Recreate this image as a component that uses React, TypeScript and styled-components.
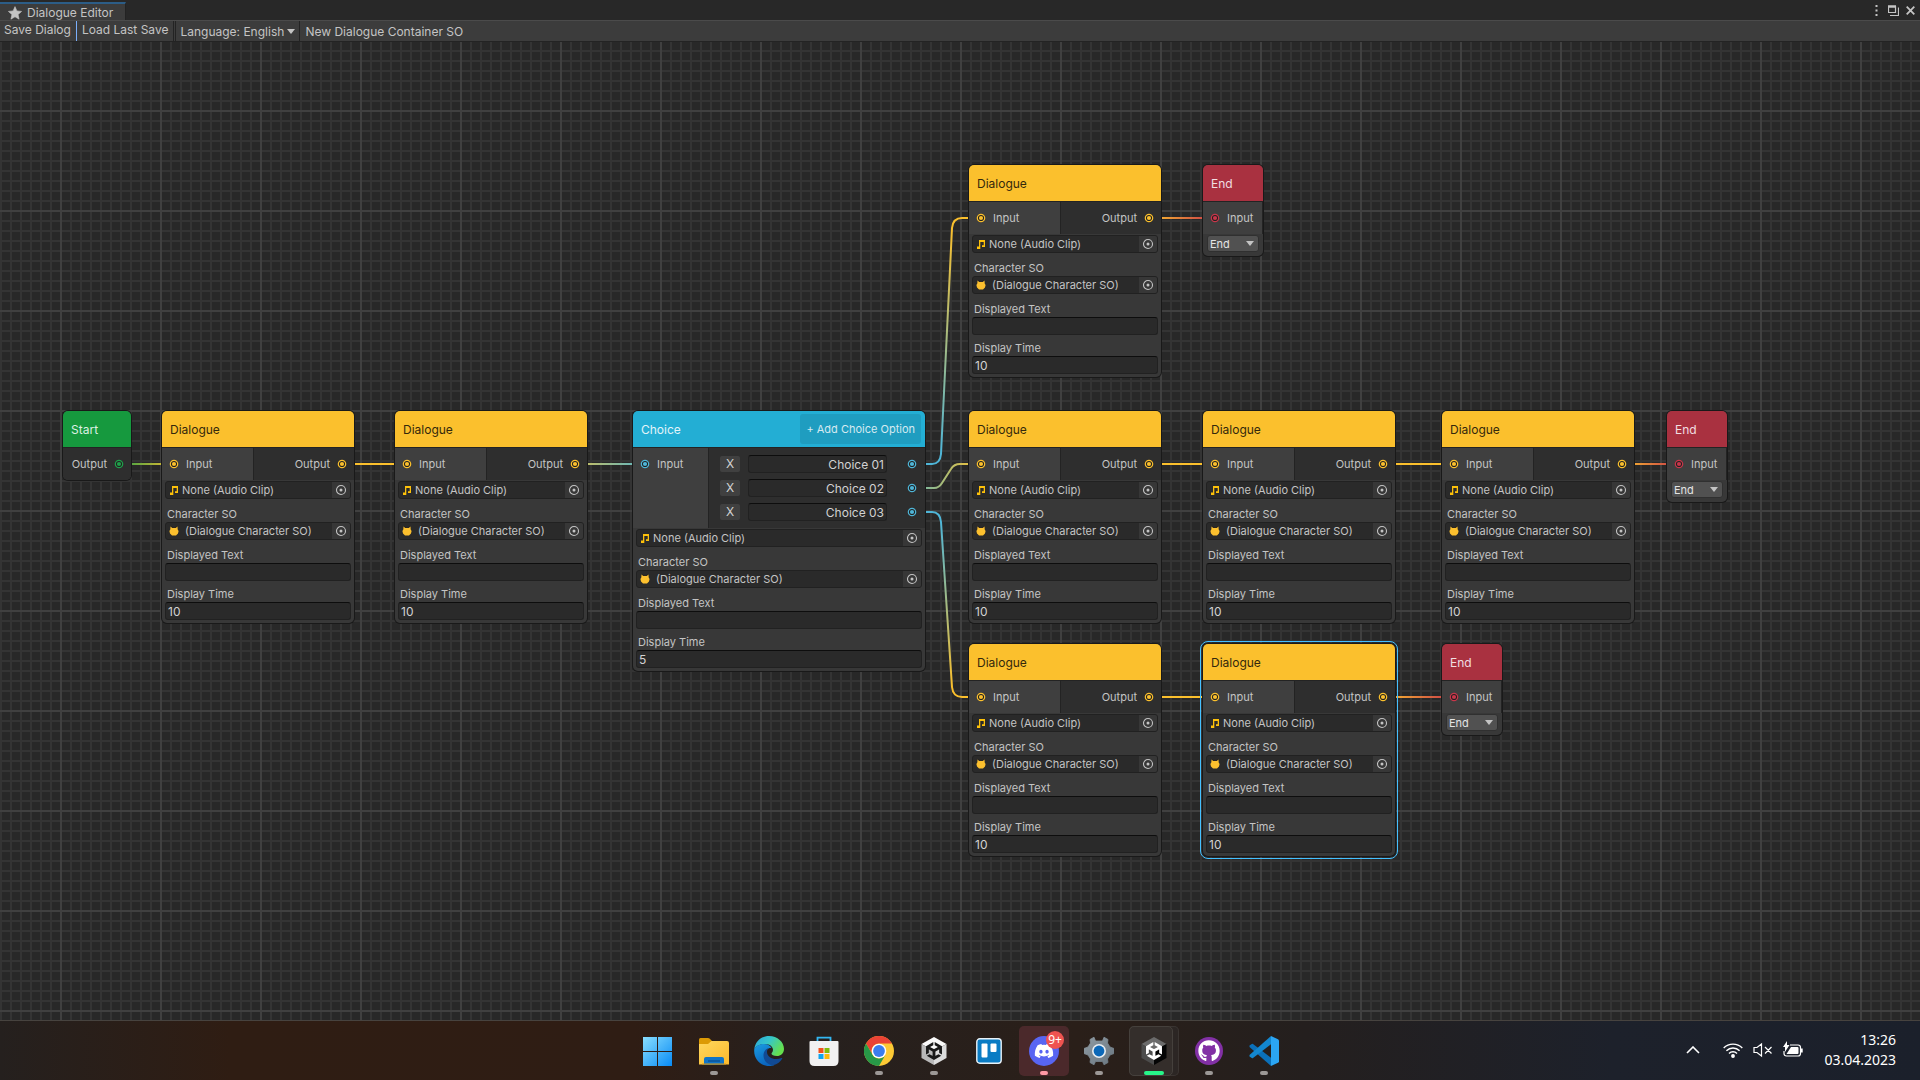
import React, { useId } from "react";
import styled, { createGlobalStyle, css } from "styled-components";
import { FaDiscord, FaGithub } from "react-icons/fa";
import { SiUnity } from "react-icons/si";

const GlobalStyle = createGlobalStyle`
  *, *::before, *::after { box-sizing: border-box; }
  body {
    margin: 0;
    background: #282828;
    color: #c4c4c4;
    font-family: Inter, "Liberation Sans", sans-serif;
    font-size: 12px;
    line-height: 16px;
  }
  button, input, select { font: inherit; color: inherit; margin: 0; }
`;

const Desktop = styled.div`
  display: flex;
  flex-direction: column;
  min-height: 100vh;
`;

/* ---------- editor window chrome ---------- */

const TitleBar = styled.header`
  display: flex;
  justify-content: space-between;
  height: 20px;
  background: #282828;
`;

const Tab = styled.div`
  display: flex;
  align-items: center;
  gap: 5px;
  height: 18px;
  margin-top: 2px;
  padding: 1px 12px 0 8px;
  background: #3c3c3c;
  border-top: 2px solid #2c5d87;
  border-right: 1px solid #232323;
  white-space: nowrap;
`;

const WindowButtons = styled.div`
  display: flex;
  align-items: center;
  gap: 3px;
  padding-right: 3px;
`;

const WindowButton = styled.button`
  display: grid;
  place-items: center;
  width: 14px;
  height: 16px;
  padding: 0;
  border: 0;
  background: none;
`;

const Toolbar = styled.nav`
  display: flex;
  height: 22px;
  background: #3c3c3c;
  border-top: 1px solid #4b4b4b;
  border-bottom: 1px solid #232323;
`;

const ToolButton = styled.button<{ $focus?: boolean }>`
  display: flex;
  align-items: flex-start;
  margin-right: 1px;
  padding: 1px 5px 0 4px;
  border: 0;
  border-right: 1px solid ${(p) => (p.$focus ? "#7baefa" : "#232323")};
  background: none;
  white-space: nowrap;
`;

const ToolSelect = styled.select`
  appearance: none;
  height: 20px;
  padding: 2px 15px 0 4px;
  border: 0;
  background: none;
`;

const ToolSelectBox = styled.div`
  display: grid;
  align-items: center;
  border-right: 1px solid #232323;
  border-left: 1px solid #232323;
  & > * { grid-area: 1 / 1; }
  & > svg { justify-self: end; margin-right: 4px; pointer-events: none; }
`;

const ContainerName = styled.span`
  padding: 3px 5px;
  white-space: nowrap;
`;

/* ---------- graph canvas ---------- */

const Canvas = styled.main`
  position: relative;
  flex: 1;
  min-height: 840px;
  overflow: hidden;
  background-color: #282828;
  background-image:
    linear-gradient(90deg, #404040 2px, transparent 2px),
    linear-gradient(#404040 2px, transparent 2px),
    linear-gradient(90deg, #343434 2px, transparent 2px),
    linear-gradient(#343434 2px, transparent 2px);
  background-size: 100px 100px, 100px 100px, 10px 10px, 10px 10px;
  background-position: 60px 0, 0 68px, 0 0, 0 8px;
`;

const Edges = styled.svg`
  position: absolute;
  inset: 0;
  width: 100%;
  height: 100%;
  path { fill: none; stroke-width: 2; }
`;

const Node = styled.section<{ $x: number; $y: number; $w: number; $selected?: boolean }>`
  position: absolute;
  left: ${(p) => p.$x}px;
  top: ${(p) => p.$y}px;
  width: ${(p) => p.$w}px;
  border-radius: 5px;
  background: #383838;
  box-shadow: 0 0 0 1px #191919;
  font-size: 11px;
  ${(p) =>
    p.$selected &&
    css`
      outline: 1px solid #44c0ff;
      outline-offset: 2px;
    `}
`;

const NodeHeader = styled.header<{ $bg: string; $fg: string }>`
  display: flex;
  align-items: center;
  justify-content: space-between;
  height: 36px;
  padding: 0 4px 0 8px;
  border-radius: 5px 5px 0 0;
  background: ${(p) => p.$bg};
  color: ${(p) => p.$fg};
`;

const NodeTitle = styled.h2`
  margin: 0;
  padding-top: 1px;
  font-size: 12px;
  font-weight: 400;
`;

const AddButton = styled.button`
  height: 30px;
  padding: 0 6px;
  border: 0;
  border-radius: 3px;
  background: #1f9dc0;
  color: #d5eaf1;
`;

const Ports = styled.div<{ $last?: boolean }>`
  display: flex;
  border-top: 1px solid #232323;
  border-radius: ${(p) => (p.$last ? "0 0 5px 5px" : "0")};
  background: #2e2e2e;
  overflow: hidden;
`;

const PortColumn = styled.div<{ $side: "in" | "out"; $w?: number }>`
  display: flex;
  flex-direction: column;
  ${(p) => (p.$w ? `width: ${p.$w}px;` : "flex: 1;")}
  padding: 4px 8px;
  background: ${(p) => (p.$side === "in" ? "#3f3f3f" : "#2e2e2e")};
  border-right: ${(p) => (p.$side === "in" ? "1px solid #232323" : "0")};
`;

const Port = styled.div<{ $side: "in" | "out" }>`
  display: flex;
  align-items: center;
  justify-content: ${(p) => (p.$side === "in" ? "flex-start" : "flex-end")};
  gap: 8px;
  height: 24px;
`;

const Body = styled.div`
  display: flex;
  flex-direction: column;
  padding: 1px 3px 3px;
`;

const FieldLabel = styled.label<{ $tight?: boolean }>`
  margin-top: ${(p) => (p.$tight ? 5 : 7)}px;
  padding-left: 2px;
`;

const TextField = styled.input<{ $end?: boolean }>`
  width: 100%;
  min-width: 0;
  height: 18px;
  padding: 0 2px;
  border: 1px solid #212121;
  border-top-color: #0d0d0d;
  border-radius: 3px;
  background: #2a2a2a;
  color: #d2d2d2;
  text-align: ${(p) => (p.$end ? "right" : "left")};
  font-size: 12px;
`;

const ObjectField = styled.div`
  display: flex;
  align-items: center;
  height: 18px;
  border: 1px solid #212121;
  border-radius: 3px;
  background: #2a2a2a;
  overflow: hidden;
`;

const ObjectIcon = styled.span`
  display: grid;
  width: 16px;
  place-items: center;
`;

const ObjectName = styled.span<{ $indent?: boolean }>`
  flex: 1;
  padding-left: ${(p) => (p.$indent ? 3 : 0)}px;
  white-space: nowrap;
`;

const Picker = styled.button`
  display: grid;
  place-items: center;
  width: 18px;
  height: 16px;
  padding: 0;
  border: 0;
  background: #373737;
`;

const ChoiceRow = styled.div`
  display: flex;
  align-items: center;
  height: 24px;
  padding: 0 1px 0 3px;
`;

const RemoveButton = styled.button`
  width: 20px;
  height: 16px;
  padding: 0;
  border: 0;
  border-radius: 2px;
  background: #404040;
  color: #d2d2d2;
  font-size: 12px;
`;

const ChoiceInputBox = styled.div`
  flex: 1;
  display: flex;
  margin: 0 21px 0 8px;
`;

const EndSelectBox = styled.div`
  display: grid;
  align-items: center;
  padding: 0 1px 1px;
  & > * { grid-area: 1 / 1; }
  & > svg { justify-self: end; margin-right: 5px; pointer-events: none; }
`;

const EndSelect = styled.select`
  appearance: none;
  width: 100%;
  height: 17px;
  padding: 0 2px;
  border: 1px solid #303030;
  border-radius: 3px;
  background: #515151;
  color: #e4e4e4;
`;

/* ---------- taskbar ---------- */

const Taskbar = styled.footer`
  display: grid;
  grid-template-columns: 1fr auto 1fr;
  align-items: center;
  height: 60px;
  border-top: 1px solid #47433f;
  background: linear-gradient(90deg, #25201e 0%, #2f1d13 12%, #2f1d14 33%, #26201e 42%, #2a1f19 56%, #241f1e 68%, #1d212b 84%, #1b202b 100%);
`;

const Apps = styled.div`
  grid-column: 2;
  display: flex;
  gap: 5px;
  padding-left: 3px;
`;

const AppButton = styled.button<{ $bg?: string; $stack?: boolean }>`
  display: grid;
  position: relative;
  place-items: center;
  width: 50px;
  height: 50px;
  padding: 0;
  border: 0;
  border-radius: 5px;
  background: ${(p) => p.$bg || "none"};
  ${(p) =>
    p.$stack &&
    css`
      background: #2c2624;
      box-shadow: inset 0 0 0 1px #3a3431;
      &::before {
        content: "";
        position: absolute;
        inset: 0 6px 0 0;
        border: 1px solid #45403c;
        border-radius: 5px;
        background: #342e2b;
      }
      & > * { position: relative; }
    `}
`;

const Indicator = styled.span<{ $color: string; $wide?: boolean }>`
  && { position: absolute; }
  bottom: 1px;
  width: ${(p) => (p.$wide ? 20 : 8)}px;
  height: 4px;
  border-radius: 2px;
  background: ${(p) => p.$color};
`;

const CountBadge = styled.span`
  position: absolute;
  top: 5px;
  right: 5px;
  width: 18px;
  height: 18px;
  border-radius: 9px;
  background: #ef5350;
  color: #fff;
  font: 12px/18px "Noto Sans", sans-serif;
`;

const Tray = styled.div`
  display: flex;
  align-items: center;
  justify-content: flex-end;
  gap: 10px;
  padding: 0 24px 2px 0;
  color: #fff;
`;

const TrayButton = styled.button<{ $gap?: boolean }>`
  display: grid;
  place-items: center;
  width: 20px;
  height: 20px;
  margin-right: ${(p) => (p.$gap ? 10 : 0)}px;
  padding: 0;
  border: 0;
  background: none;
`;

const Clock = styled.time`
  font: 14px/20px "Noto Sans", sans-serif;
  text-align: right;
  padding-left: 11px;
`;

/* ---------- drawings ---------- */

const Caret = () => (
  <svg width="8" height="5" viewBox="0 0 8 5" aria-hidden="true">
    <path d="M0 0h8L4 5z" fill="#c4c4c4" />
  </svg>
);

const Star = () => (
  <svg width="14" height="14" viewBox="0 0 14 14" aria-hidden="true">
    <path d="M7 .6 8.9 4.9l4.7.5-3.5 3.1 1 4.7L7 10.8l-4.1 2.4 1-4.7L.4 5.4l4.7-.5z" fill="#c4c4c4" stroke="#c4c4c4" strokeWidth=".6" strokeLinejoin="round" />
  </svg>
);

const PortDot = ({ color }: { color: string }) => (
  <svg width="8" height="8" viewBox="0 0 8 8" overflow="visible" aria-hidden="true">
    <circle cx="4" cy="4" r="3.7" fill="#212121" stroke={color} strokeWidth="1.2" />
    <circle cx="4" cy="4" r="2.100" fill={color} />
  </svg>
);

const Note = () => (
  <svg width="8" height="9" viewBox="0 0 8 9" aria-hidden="true">
    <path d="M2 0h6v7H5V5.200h1.700V2H3.300v7H0V6.500h2z" fill="#fdc10a" />
  </svg>
);

const Cat = () => (
  <svg width="10" height="10" viewBox="0 0 10 10" aria-hidden="true">
    <path d="M1.500.4 3.300 2h3.400L8.500.4l.2 3 .9 1.600-.6 2.500L7 9.600H3L1 7.500.4 5l.9-1.600z" fill="#fcc02e" />
    <path d="M2 .2 3.400 1.400h3.200L8 .2" fill="none" stroke="#2a2420" strokeWidth=".8" />
  </svg>
);

const Target = () => (
  <svg width="12" height="12" viewBox="0 0 12 12" aria-hidden="true">
    <circle cx="6" cy="6" r="4.500" fill="none" stroke="#c4c4c4" strokeWidth="1.100" />
    <circle cx="6" cy="6" r="1.500" fill="#c4c4c4" />
  </svg>
);

const WindowsLogo = () => (
  <svg width="32" height="30" viewBox="0 0 32 30" aria-hidden="true">
    <defs>
      <linearGradient id="win" x1="0" y1="0" x2="29" y2="29" gradientUnits="userSpaceOnUse">
        <stop offset="0" stopColor="#8be0ff" />
        <stop offset="1" stopColor="#0a8cf5" />
      </linearGradient>
    </defs>
    <path d="M0 1h14v14H0zM15 1h14v14H15zM0 16h14v14H0zM15 16h14v14H15z" fill="url(#win)" />
  </svg>
);

const Folder = () => (
  <svg width="30" height="30" viewBox="0 0 30 30" aria-hidden="true">
    <defs>
      <linearGradient id="fold" x1="0" y1="0" x2="1" y2="1">
        <stop offset="0" stopColor="#ffd75e" />
        <stop offset="1" stopColor="#fbb92c" />
      </linearGradient>
    </defs>
    <path d="M0 3.500Q0 2 1.500 2H9q1 0 1.800.8L13 5v5H0z" fill="#dc9a05" />
    <path d="M0 8h9l3.500-3H28q2 0 2 2v21.500H0z" fill="url(#fold)" />
    <path d="M5 28.500V23q0-2 2-2h16q2 0 2 2v5.500z" fill="#1074c8" />
    <path d="M9 25h12" stroke="#0a4f91" strokeWidth="1.300" />
    <path d="M3 28h24" stroke="#e09a13" />
  </svg>
);

const EdgeLogo = () => (
  <svg width="30" height="30" viewBox="0 0 30 30" aria-hidden="true">
    <defs>
      <linearGradient id="edgeTop" x1="0" y1="0" x2="1" y2=".5">
        <stop offset="0" stopColor="#2aa5dc" />
        <stop offset=".5" stopColor="#36c6c9" />
        <stop offset="1" stopColor="#65e04e" />
      </linearGradient>
      <linearGradient id="edgeLeft" x1="0" y1="0" x2=".5" y2="1">
        <stop offset="0" stopColor="#1b9de2" />
        <stop offset="1" stopColor="#0a63bd" />
      </linearGradient>
    </defs>
    <path d="M.3 13C1.500 5 7.500 0 15 0c8.500 0 15 6 15 13 0 4.500-3.500 7-7 7-3.500 0-5.500-1-5.500-2.200 0-1 1.500-1.500 1.500-4C19 11 16 8 11 8 6 8 2 10 .3 13z" fill="url(#edgeTop)" />
    <path d="M.3 13C2 9.500 6 8 10 8c4 0 6.500 1.800 7.500 4-3-.5-6 1.500-6 6 0 5.500 3.500 10 9 11-1.500.7-3.500 1-5.500 1C6 30-.8 22 .3 13z" fill="url(#edgeLeft)" />
    <path d="M15 12c-3.500.8-5.500 4-5.500 7.500 0 5 4 9.500 9.500 9.700 4.500-.7 7.500-3.500 9.300-6.700.2-.5-.2-.8-.7-.5C20.500 25 13 21.500 13 16c0-1.700.7-3.200 2-4z" fill="#114a94" />
  </svg>
);

const StoreLogo = () => (
  <svg width="30" height="30" viewBox="0 0 30 30" aria-hidden="true">
    <path d="M8.500 6V1.700h13V6" fill="none" stroke="#33b7f2" strokeWidth="1.800" />
    <path d="M.5 6q0-1 1-1h27q1 0 1 1v19q0 5-5 5h-19q-5 0-5-5z" fill="#f1f1f1" />
    <path d="M9.500 12h5v5h-5z" fill="#f1511b" />
    <path d="M15.500 12h5v5h-5z" fill="#80bb0a" />
    <path d="M9.500 18h5v5h-5z" fill="#0fa5ee" />
    <path d="M15.500 18h5v5h-5z" fill="#fbb90e" />
  </svg>
);

const ChromeLogo = () => (
  <svg width="30" height="30" viewBox="0 0 30 30" aria-hidden="true">
    <circle cx="15" cy="15" r="15" fill="#fcc934" />
    <path d="M2 7.500A15 15 0 0 1 28 7.500H15a7.500 7.500 0 0 0-6.500 11.200z" fill="#ea4335" />
    <path d="M2 7.500 8.500 18.700A7.500 7.500 0 0 0 21.500 18.700L15 30A15 15 0 0 1 2 7.500z" fill="#279847" />
    <circle cx="15" cy="15" r="7.300" fill="#fff" />
    <circle cx="15" cy="15" r="5.900" fill="#3b7ded" />
  </svg>
);

const CubeBox = styled.span`
  display: grid;
  place-items: center;
  & > * { grid-area: 1 / 1; }
`;

const UnityCube = ({ dark }: { dark?: boolean }) => {
  const [top, left, right, glyph] = dark
    ? ["#6b6b6b", "#4c4c4c", "#050505", "#fff"]
    : ["#fafafa", "#b9b9b9", "#dcdcdc", "#191919"];
  return (
    <CubeBox>
      <svg width="26" height="28" viewBox="0 0 26 28" aria-hidden="true">
        <path d="M13 0 25.500 7 13 14 .5 7z" fill={top} />
        <path d="M.5 7 13 14v14L.5 21z" fill={left} />
        <path d="M25.500 7 13 14v14l12.500-7z" fill={right} />
      </svg>
      <SiUnity size={18} color={glyph} />
    </CubeBox>
  );
};

const TrelloLogo = () => (
  <svg width="26" height="26" viewBox="0 0 26 26" aria-hidden="true">
    <rect x=".8" y=".8" width="24.400" height="24.400" rx="3" fill="#0a7cc4" stroke="#e9f2f8" strokeWidth="1.400" />
    <rect x="5.500" y="5.500" width="6" height="14" rx="1" fill="#fff" />
    <rect x="14.500" y="5.500" width="6" height="8.500" rx="1" fill="#fff" />
  </svg>
);

const RoundLogo = styled.span<{ $size: number; $bg: string }>`
  display: grid;
  place-items: center;
  width: ${(p) => p.$size}px;
  height: ${(p) => p.$size}px;
  border-radius: 50%;
  background: ${(p) => p.$bg};
  color: #fff;
`;

const GearLogo = () => (
  <svg width="30" height="30" viewBox="0 0 30 30" aria-hidden="true">
    <defs>
      <linearGradient id="gear" x1="0" y1="0" x2="1" y2="1">
        <stop offset="0" stopColor="#8f9ba3" />
        <stop offset="1" stopColor="#697680" />
      </linearGradient>
    </defs>
    <path
      d="M11.500 5 10 1.200 6 3.500 6.500 7 4 11 0 12.500v5L4 19l2.500 4L6 26.500l4 2.300L11.500 25.500h7L20 28.800l4-2.300-.5-3.500L26 19l4-1.500v-5L26 11l-2.500-4L24 3.500l-4-2.300L18.500 5z"
      fill="url(#gear)"
      stroke="url(#gear)"
      strokeWidth=".8"
      strokeLinejoin="round"
    />
    <circle cx="15" cy="15" r="7" fill="#e9eef2" />
    <circle cx="15" cy="15" r="5.400" fill="#0b68b8" />
  </svg>
);

const CodeLogo = () => (
  <svg width="30" height="30" viewBox="0 0 30 30" aria-hidden="true">
    <path d="M.5 9.500 2.800 8q.6-.3 1.200.1L22 21.700V30L.5 11z" fill="#0b70b9" />
    <path d="M.5 20.500 2.800 22q.6.300 1.200-.1L22 8.300V0L.5 19z" fill="#1387cf" />
    <path d="M22 0l7 3.200q1 .5 1 1.600v20.400q0 1.100-1 1.600L22 30z" fill="#2ba5f3" />
  </svg>
);

const ChevronUp = () => (
  <svg width="14" height="8" viewBox="0 0 14 8" fill="none" stroke="#fff" strokeWidth="1.600" aria-hidden="true">
    <path d="M1 7 7 1l6 6" />
  </svg>
);

const Wifi = () => (
  <svg width="20" height="16" viewBox="0 0 20 16" fill="none" stroke="#fff" strokeWidth="1.400" aria-hidden="true">
    <path d="M.7 6a13 13 0 0 1 18.600 0M3.400 8.800a9.300 9.300 0 0 1 13.200 0M6 11.500a5.600 5.600 0 0 1 8 0" />
    <circle cx="10" cy="14" r="1.200" fill="#fff" />
  </svg>
);

const Muted = () => (
  <svg width="20" height="16" viewBox="0 0 20 16" fill="none" stroke="#fff" strokeWidth="1.200" aria-hidden="true">
    <path d="M1 5.500h3L8.500 2v12L4 10.500H1zM12 5l6.500 6.500M18.500 5 12 11.500" />
  </svg>
);

const Battery = () => (
  <svg width="20" height="18" viewBox="0 0 20 18" aria-hidden="true">
    <path d="M7 4h8q2.500 0 2.500 2.500v6q0 2.500-2.500 2.500H3.500Q1 15 1 12.500V10" fill="none" stroke="#fff" strokeWidth="1.200" />
    <path d="M8 6h6.500q1 0 1 1v5q0 1-1 1H3.500z" fill="#fff" />
    <path d="M18 7.500h1.700v4H18z" fill="#fff" />
    <path d="M4 0v4h2.500L2 11V6H0z" fill="#fff" />
  </svg>
);

/* ---------- graph pieces ---------- */

const YELLOW = "#fbc02d";
const BLUE = "#4fb6d8";
const RED = "#c8364a";
const GREEN = "#1fa04a";

const Fields = ({ time }: { time: string }) => {
  const id = useId();
  return (
    <Body>
      <ObjectField>
        <ObjectIcon><Note /></ObjectIcon>
        <ObjectName>None (Audio Clip)</ObjectName>
        <Picker aria-label="Pick audio clip"><Target /></Picker>
      </ObjectField>
      <FieldLabel as="span">Character SO</FieldLabel>
      <ObjectField>
        <ObjectIcon><Cat /></ObjectIcon>
        <ObjectName $indent>(Dialogue Character SO)</ObjectName>
        <Picker aria-label="Pick character"><Target /></Picker>
      </ObjectField>
      <FieldLabel htmlFor={`${id}text`}>Displayed Text</FieldLabel>
      <TextField id={`${id}text`} />
      <FieldLabel $tight htmlFor={`${id}time`}>Display Time</FieldLabel>
      <TextField id={`${id}time`} defaultValue={time} />
    </Body>
  );
};

interface Placed {
  x: number;
  y: number;
  selected?: boolean;
}

const StartNode = ({ x, y }: Placed) => (
  <Node $x={x} $y={y} $w={68}>
    <NodeHeader $bg="#16993e" $fg="#dcefe2"><NodeTitle>Start</NodeTitle></NodeHeader>
    <Ports $last>
      <PortColumn $side="out"><Port $side="out">Output<PortDot color={GREEN} /></Port></PortColumn>
    </Ports>
  </Node>
);

const DialogueNode = ({ x, y, selected }: Placed) => (
  <Node $x={x} $y={y} $w={192} $selected={selected}>
    <NodeHeader $bg={YELLOW} $fg="#33280c"><NodeTitle>Dialogue</NodeTitle></NodeHeader>
    <Ports>
      <PortColumn $side="in" $w={92}><Port $side="in"><PortDot color={YELLOW} />Input</Port></PortColumn>
      <PortColumn $side="out"><Port $side="out">Output<PortDot color={YELLOW} /></Port></PortColumn>
    </Ports>
    <Fields time="10" />
  </Node>
);

const ChoiceNode = ({ x, y }: Placed) => (
  <Node $x={x} $y={y} $w={292}>
    <NodeHeader $bg="#23aed4" $fg="#e2f4f9">
      <NodeTitle>Choice</NodeTitle>
      <AddButton>+ Add Choice Option</AddButton>
    </NodeHeader>
    <Ports>
      <PortColumn $side="in" $w={76}><Port $side="in"><PortDot color={BLUE} />Input</Port></PortColumn>
      <PortColumn $side="out">
        {["Choice 01", "Choice 02", "Choice 03"].map((name) => (
          <ChoiceRow key={name}>
            <RemoveButton aria-label={`Remove ${name}`}>X</RemoveButton>
            <ChoiceInputBox><TextField $end aria-label={name} defaultValue={name} /></ChoiceInputBox>
            <PortDot color={BLUE} />
          </ChoiceRow>
        ))}
      </PortColumn>
    </Ports>
    <Fields time="5" />
  </Node>
);

const EndNode = ({ x, y }: Placed) => (
  <Node $x={x} $y={y} $w={60}>
    <NodeHeader $bg="#a93140" $fg="#f1dfe1"><NodeTitle>End</NodeTitle></NodeHeader>
    <Ports>
      <PortColumn $side="in" $w={60}><Port $side="in"><PortDot color={RED} />Input</Port></PortColumn>
    </Ports>
    <Body>
      <EndSelectBox>
        <EndSelect aria-label="End type"><option>End</option></EndSelect>
        <Caret />
      </EndSelectBox>
    </Body>
  </Node>
);

interface EdgeData {
  d: string;
  from: string;
  to: string;
  axis: [number, number, number, number];
}

const flat = (x1: number, x2: number, y: number, from: string, to: string): EdgeData => ({
  d: `M${x1} ${y}H${x2}`,
  from,
  to,
  axis: [x1, y, x2, y],
});

const EDGES: EdgeData[] = [
  flat(119, 174, 422, "#2da046", "#f0bc30"),
  flat(342, 407, 422, YELLOW, YELLOW),
  flat(575, 645, 422, "#d3bf58", "#58b6c8"),
  flat(1149, 1215, 422, YELLOW, YELLOW),
  flat(1383, 1454, 422, YELLOW, YELLOW),
  flat(1622, 1679, 422, YELLOW, "#c8364a"),
  flat(1149, 1215, 176, YELLOW, "#c8364a"),
  flat(1149, 1215, 655, YELLOW, YELLOW),
  flat(1383, 1454, 655, YELLOW, "#c8364a"),
  { d: "M912 422H932Q940 422 941 412L952 186Q953 176 962 176H981", from: BLUE, to: YELLOW, axis: [0, 412, 0, 186] },
  { d: "M912 446H934Q939 446 942 441L951 427Q954 422 960 422H981", from: "#7ab8a0", to: "#e8c040", axis: [922, 0, 972, 0] },
  { d: "M912 470H932Q940 470 941 480L952 645Q953 655 962 655H981", from: BLUE, to: YELLOW, axis: [0, 480, 0, 645] },
];

const Graph = () => (
  <Canvas>
    <Edges aria-hidden="true">
      <defs>
        {EDGES.map((e, i) => (
          <linearGradient key={i} id={`edge${i}`} gradientUnits="userSpaceOnUse" x1={e.axis[0]} y1={e.axis[1]} x2={e.axis[2]} y2={e.axis[3]}>
            <stop offset="0" stopColor={e.from} />
            <stop offset="1" stopColor={e.to} />
          </linearGradient>
        ))}
      </defs>
      {EDGES.map((e, i) => (
        <path key={i} d={e.d} stroke={e.from === e.to ? e.from : `url(#edge${i})`} />
      ))}
    </Edges>
    <StartNode x={63} y={369} />
    <DialogueNode x={162} y={369} />
    <DialogueNode x={395} y={369} />
    <ChoiceNode x={633} y={369} />
    <DialogueNode x={969} y={123} />
    <EndNode x={1203} y={123} />
    <DialogueNode x={969} y={369} />
    <DialogueNode x={1203} y={369} />
    <DialogueNode x={1442} y={369} />
    <EndNode x={1667} y={369} />
    <DialogueNode x={969} y={602} />
    <DialogueNode x={1203} y={602} selected />
    <EndNode x={1442} y={602} />
  </Canvas>
);

export default function App() {
  return (
    <Desktop>
      <GlobalStyle />
      <TitleBar>
        <Tab><Star />Dialogue Editor</Tab>
        <WindowButtons>
          <WindowButton aria-label="Menu">
            <svg width="3" height="11" viewBox="0 0 3 11" fill="#c4c4c4"><path d="M.5 0h2v2h-2zM.5 4.500h2v2h-2zM.5 9h2v2h-2z" /></svg>
          </WindowButton>
          <WindowButton aria-label="Restore">
            <svg width="11" height="11" viewBox="0 0 11 11" fill="none" stroke="#c4c4c4"><path d="M.5 1.500h7v6h-7zM0 1.500h8M10.500 2.500v8H2" strokeWidth="1.200" /><path d="M0 1.500h8" strokeWidth="2.500" /></svg>
          </WindowButton>
          <WindowButton aria-label="Close">
            <svg width="9" height="9" viewBox="0 0 9 9" stroke="#c4c4c4" strokeWidth="1.800"><path d="M.7.7l7.600 7.600M8.300.7.7 8.300" /></svg>
          </WindowButton>
        </WindowButtons>
      </TitleBar>
      <Toolbar>
        <ToolButton $focus>Save Dialog</ToolButton>
        <ToolButton>Load Last Save</ToolButton>
        <ToolSelectBox>
          <ToolSelect aria-label="Language"><option>Language: English</option></ToolSelect>
          <Caret />
        </ToolSelectBox>
        <ContainerName>New Dialogue Container SO</ContainerName>
      </Toolbar>
      <Graph />
      <Taskbar>
        <Apps>
          <AppButton aria-label="Start menu"><WindowsLogo /></AppButton>
          <AppButton aria-label="Explorer"><Folder /><Indicator $color="#9c9896" /></AppButton>
          <AppButton aria-label="Edge"><EdgeLogo /></AppButton>
          <AppButton aria-label="Store"><StoreLogo /></AppButton>
          <AppButton aria-label="Chrome"><ChromeLogo /><Indicator $color="#9c9896" /></AppButton>
          <AppButton aria-label="Unity Hub"><UnityCube /><Indicator $color="#9c9896" /></AppButton>
          <AppButton aria-label="Trello"><TrelloLogo /></AppButton>
          <AppButton aria-label="Discord" $bg="#4b292b">
            <RoundLogo $size={30} $bg="#5865f2"><FaDiscord size={20} /></RoundLogo>
            <CountBadge>9+</CountBadge>
            <Indicator $color="#ff99a4" />
          </AppButton>
          <AppButton aria-label="Settings"><GearLogo /><Indicator $color="#9c9896" /></AppButton>
          <AppButton aria-label="Unity" $stack><UnityCube dark /><Indicator $color="#27f589" $wide /></AppButton>
          <AppButton aria-label="GitHub"><RoundLogo $size={28} $bg="#8230a5"><FaGithub size={22} /></RoundLogo><Indicator $color="#9c9896" /></AppButton>
          <AppButton aria-label="VS Code"><CodeLogo /><Indicator $color="#9c9896" /></AppButton>
        </Apps>
        <Tray>
          <TrayButton aria-label="Hidden icons" $gap><ChevronUp /></TrayButton>
          <TrayButton aria-label="Network"><Wifi /></TrayButton>
          <TrayButton aria-label="Volume"><Muted /></TrayButton>
          <TrayButton aria-label="Battery"><Battery /></TrayButton>
          <Clock>13:26<br />03.04.2023</Clock>
        </Tray>
      </Taskbar>
    </Desktop>
  );
}
